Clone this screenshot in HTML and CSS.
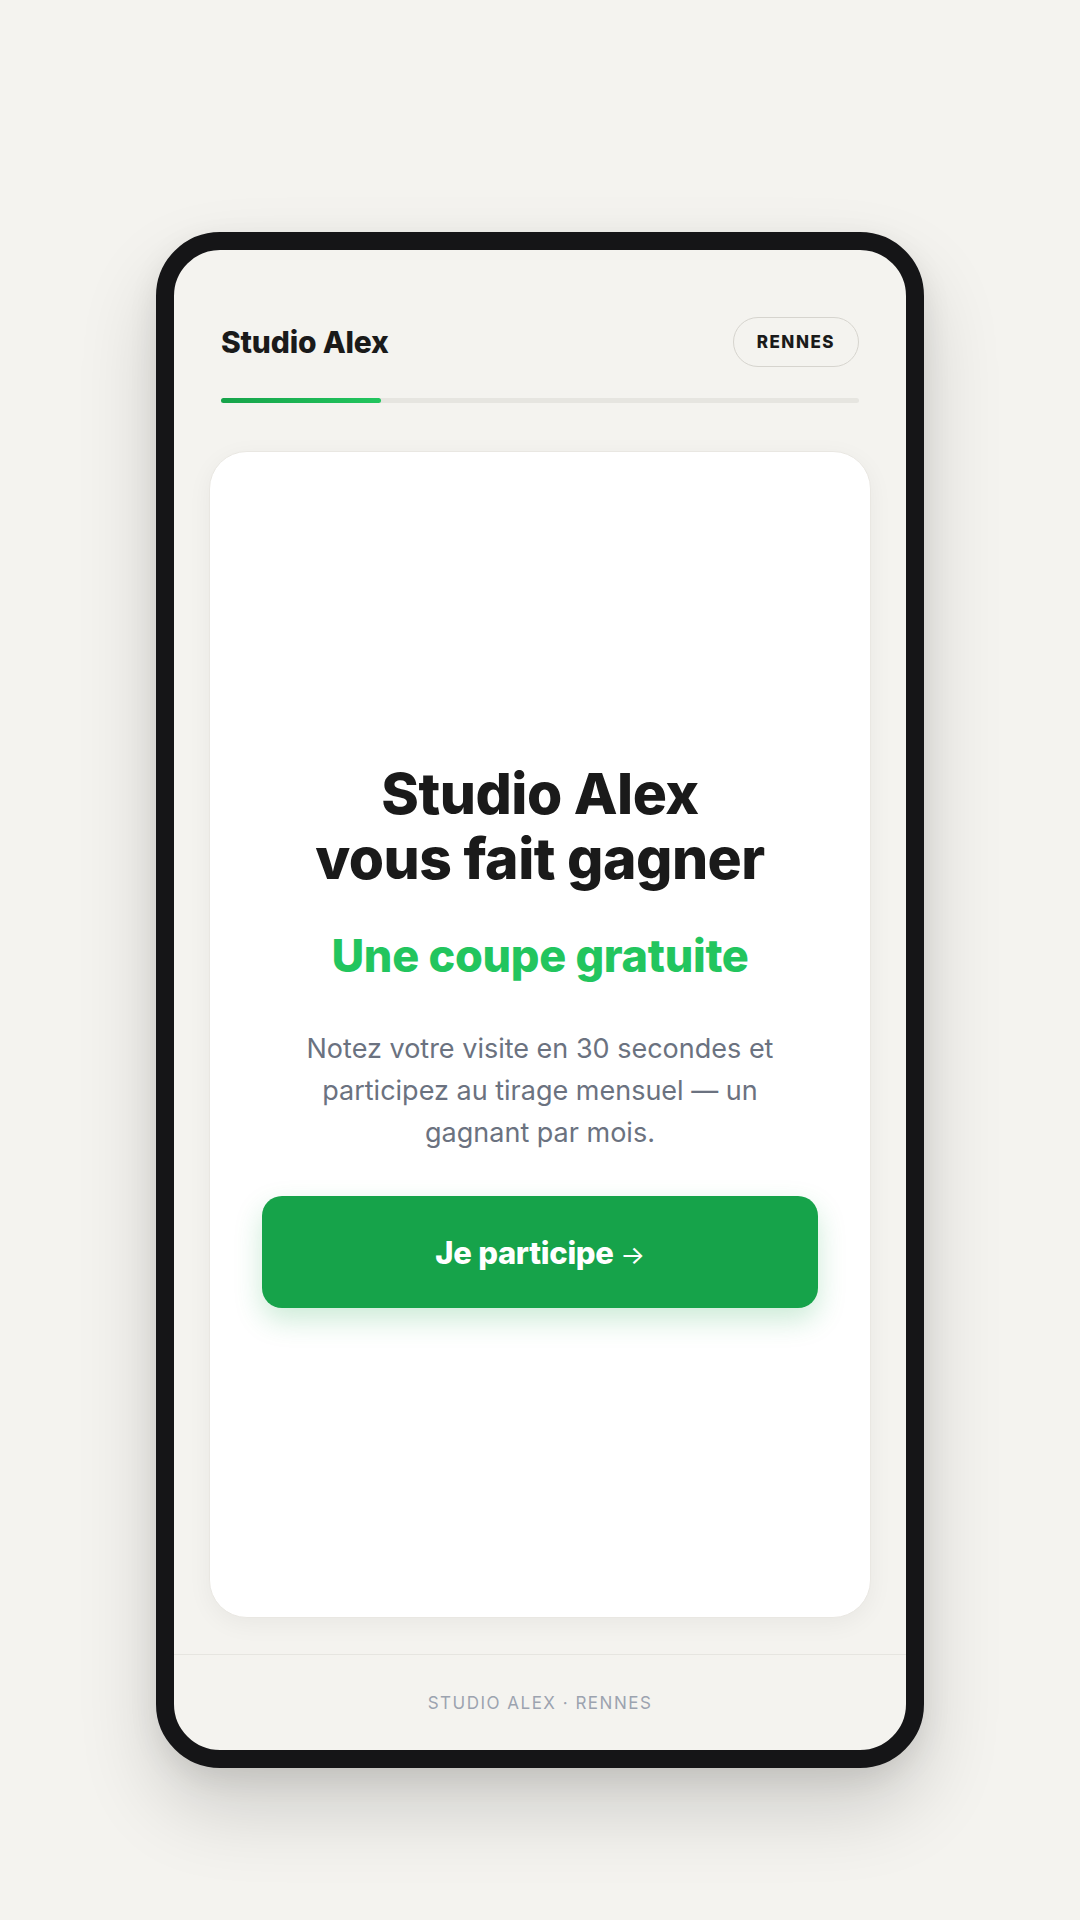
FILE: index.html
```html
<!DOCTYPE html>
<html lang="fr">
<head>
	<meta charset="utf-8">
	<title>Studio Alex — Une coupe gratuite</title>
	<link rel="stylesheet" href="styles.css">
</head>
<body>
	<div class="phone">
		<div class="screen">
			<div class="top-bar">
				<div class="brand">Studio Alex</div>
				<div class="city-pill">RENNES</div>
			</div>
			<div class="progress">
				<div class="progress-fill" style="width: 25%"></div>
			</div>
			<div class="card">
				<h1 class="title">Studio Alex<br>vous fait gagner</h1>
				<div class="prize">Une coupe gratuite</div>
				<p class="intro">Notez votre visite en 30 secondes et participez au tirage mensuel — un gagnant par mois.</p>
				<button class="cta">Je participe <span class="arrow">→</span></button>
			</div>
			<div class="footer">Studio Alex · Rennes</div>
		</div>
	</div>
</body>
</html>
```

FILE: styles.css
```css
* {
	margin: 0;
	padding: 0;
	box-sizing: border-box;
}

body {
	background: #f4f3ef;
	font-family: Inter, "Noto Sans", "DejaVu Sans", sans-serif;
	color: #1a1a1a;
	display: flex;
	justify-content: center;
	padding-top: 232px;
	height: 1920px;
}

.phone {
	width: 768px;
	height: 1536px;
	border: 18px solid #151517;
	border-radius: 64px;
	background: #f4f3ef;
	box-shadow: 0 40px 80px rgba(0, 0, 0, 0.16), 0 10px 30px rgba(0, 0, 0, 0.08);
	overflow: hidden;
}

.screen {
	height: 100%;
	display: flex;
	flex-direction: column;
}

.top-bar {
	display: flex;
	justify-content: space-between;
	align-items: center;
	padding: 67px 47px 0;
}

.brand {
	font-size: 30px;
	font-weight: 800;
	letter-spacing: -0.2px;
}

.city-pill {
	height: 50px;
	padding: 0 23px;
	border: 1.5px solid #d6d4ce;
	border-radius: 999px;
	display: flex;
	align-items: center;
	font-size: 17px;
	font-weight: 800;
	letter-spacing: 1.5px;
}

.progress {
	margin: 31px 47px 0;
	height: 5px;
	border-radius: 3px;
	background: #e6e5e0;
}

.progress-fill {
	height: 100%;
	border-radius: 3px;
	background: linear-gradient(90deg, #16a34a, #22c55e);
}

.card {
	flex: 1;
	margin: 48px 35px 0;
	background: #fff;
	border: 1px solid #e9e7e2;
	border-radius: 38px;
	box-shadow: 0 6px 24px rgba(0, 0, 0, 0.05);
	display: flex;
	flex-direction: column;
	align-items: center;
	justify-content: center;
	text-align: center;
	padding: 0 52px;
}

.title {
	font-size: 57px;
	line-height: 65px;
	font-weight: 800;
	letter-spacing: -0.5px;
}

.prize {
	margin-top: 40px;
	font-size: 45px;
	line-height: 50px;
	font-weight: 800;
	color: #22c55e;
	letter-spacing: -0.3px;
}

.intro {
	margin-top: 47px;
	padding: 0 20px;
	font-size: 27px;
	line-height: 42px;
	color: #6b7280;
}

.cta {
	margin-top: 42px;
	width: 100%;
	height: 112px;
	border: none;
	border-radius: 20px;
	background: #16a34a;
	color: #fff;
	font-family: inherit;
	font-size: 31px;
	font-weight: 800;
	letter-spacing: -0.3px;
	box-shadow: 0 12px 28px rgba(22, 163, 74, 0.22);
}

.cta .arrow {
	font-weight: 400;
	font-size: 26px;
}

.footer {
	margin-top: 36px;
	border-top: 1px solid #e6e5e0;
	height: 96px;
	display: flex;
	align-items: center;
	justify-content: center;
	font-size: 17px;
	letter-spacing: 1.5px;
	text-transform: uppercase;
	color: #9ca3af;
}
```
